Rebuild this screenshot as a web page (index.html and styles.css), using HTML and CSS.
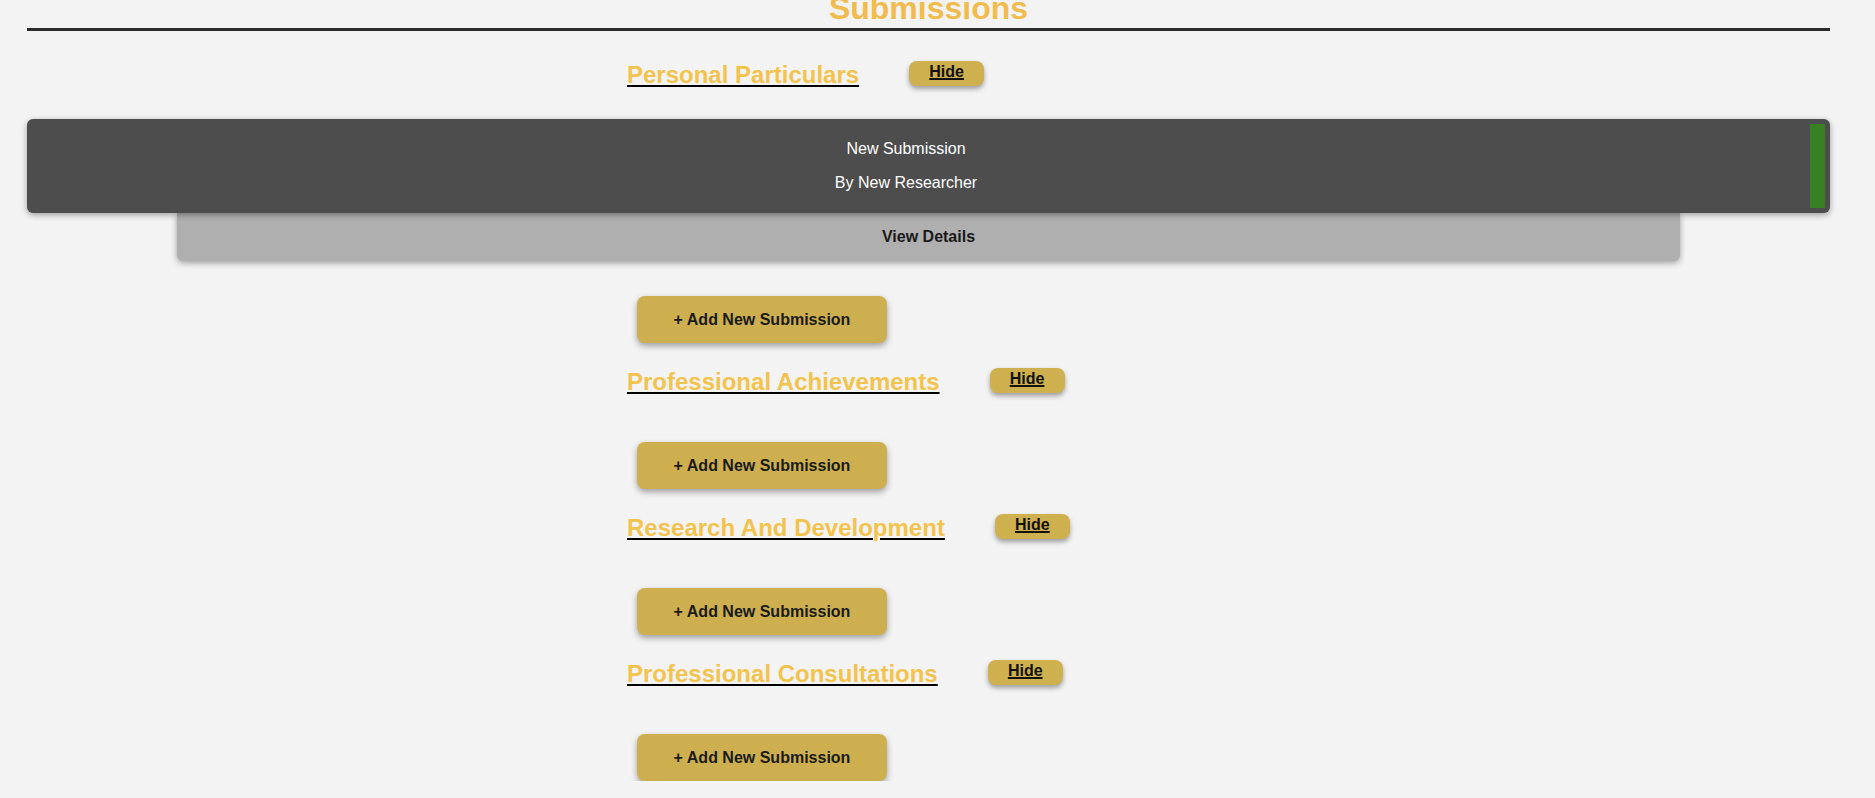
FILE: index.html
```html
<!DOCTYPE html>
<html lang="en">
<head>
<meta charset="utf-8">
<title>Submissions</title>
<link rel="stylesheet" href="styles.css">
</head>
<body>
<div class="page">
  <h1 class="title">Submissions</h1>
  <div class="sections">
    <section class="section">
      <div class="section-head">
        <h2 class="section-title">Personal Particulars</h2>
        <button class="hide-btn">Hide</button>
      </div>
      <div class="cards">
        <div class="card">
          <div class="card-text">
            <p>New Submission</p>
            <p>By New Researcher</p>
          </div>
          <div class="status-bar"></div>
        </div>
        <div class="view-details">View Details</div>
      </div>
      <button class="add-btn">+ Add New Submission</button>
    </section>
    <section class="section">
      <div class="section-head">
        <h2 class="section-title">Professional Achievements</h2>
        <button class="hide-btn">Hide</button>
      </div>
      <button class="add-btn">+ Add New Submission</button>
    </section>
    <section class="section">
      <div class="section-head">
        <h2 class="section-title">Research And Development</h2>
        <button class="hide-btn">Hide</button>
      </div>
      <button class="add-btn">+ Add New Submission</button>
    </section>
    <section class="section">
      <div class="section-head">
        <h2 class="section-title">Professional Consultations</h2>
        <button class="hide-btn">Hide</button>
      </div>
      <button class="add-btn">+ Add New Submission</button>
    </section>
  </div>
</div>
</body>
</html>
```
FILE: styles.css
```css
html, body {
  margin: 0;
  padding: 0;
  background: #f3f3f3;
  font-family: "Liberation Sans", Arial, sans-serif;
}

.page {
  padding: 0 45px 0 27px;
}

.title {
  margin: -10px 0 0;
  font-size: 32px;
  line-height: 37px;
  font-weight: bold;
  color: #f1bc4d;
  text-align: center;
  padding-bottom: 1px;
  border-bottom: 3px solid #2b2b2b;
}

.sections {
  padding-top: 5px;
}

.section {
  display: flex;
  flex-direction: column;
}

.section-head {
  display: flex;
  align-items: flex-start;
  gap: 50px;
  margin-top: 25px;
  margin-bottom: 11px;
  padding-left: 600px;
}

.section-title {
  margin: 0;
  font-size: 24px;
  line-height: 28px;
  font-weight: bold;
  color: #f2c44e;
  text-decoration: underline;
  text-decoration-color: #000;
  text-decoration-thickness: 2px;
  text-underline-offset: 2px;
}

.hide-btn {
  width: 75px;
  height: 25px;
  padding: 0 0 3px;
  border: none;
  border-radius: 8px;
  background: #cfb04e;
  box-shadow: 0 3px 5px rgba(0, 0, 0, 0.35);
  font-family: "Liberation Sans", Arial, sans-serif;
  font-size: 16px;
  line-height: 18px;
  font-weight: bold;
  color: #111;
  text-decoration: underline;
  text-decoration-thickness: 2px;
  cursor: pointer;
}

.cards {
  margin-top: 19px;
  display: flex;
  flex-direction: column;
}

.card {
  position: relative;
  z-index: 1;
  display: flex;
  padding: 5px;
  background: #4d4d4d;
  border-radius: 6px;
  box-shadow: 0 2px 6px rgba(0, 0, 0, 0.35);
}

.card-text {
  flex: 1;
  margin-right: 30px;
  text-align: center;
  color: #fff;
  font-size: 16px;
}

.card-text p {
  margin: 16px 0;
}

.status-bar {
  width: 15px;
  background: #388024;
}

.view-details {
  margin: 0 150px;
  padding: 15px;
  background: #afafaf;
  border-radius: 0 0 6px 6px;
  box-shadow: 0 2px 6px rgba(0, 0, 0, 0.35);
  text-align: center;
  font-size: 16px;
  font-weight: bold;
  color: #1a1a1a;
}

.add-btn {
  align-self: flex-start;
  margin: 35px 0 0 610px;
  width: 250px;
  height: 47px;
  padding: 0;
  border: none;
  border-radius: 8px;
  background: #ceaf4f;
  box-shadow: 0 3px 6px rgba(0, 0, 0, 0.35);
  font-family: "Liberation Sans", Arial, sans-serif;
  font-size: 16px;
  font-weight: bold;
  color: #1a1a1a;
  cursor: pointer;
}
```
